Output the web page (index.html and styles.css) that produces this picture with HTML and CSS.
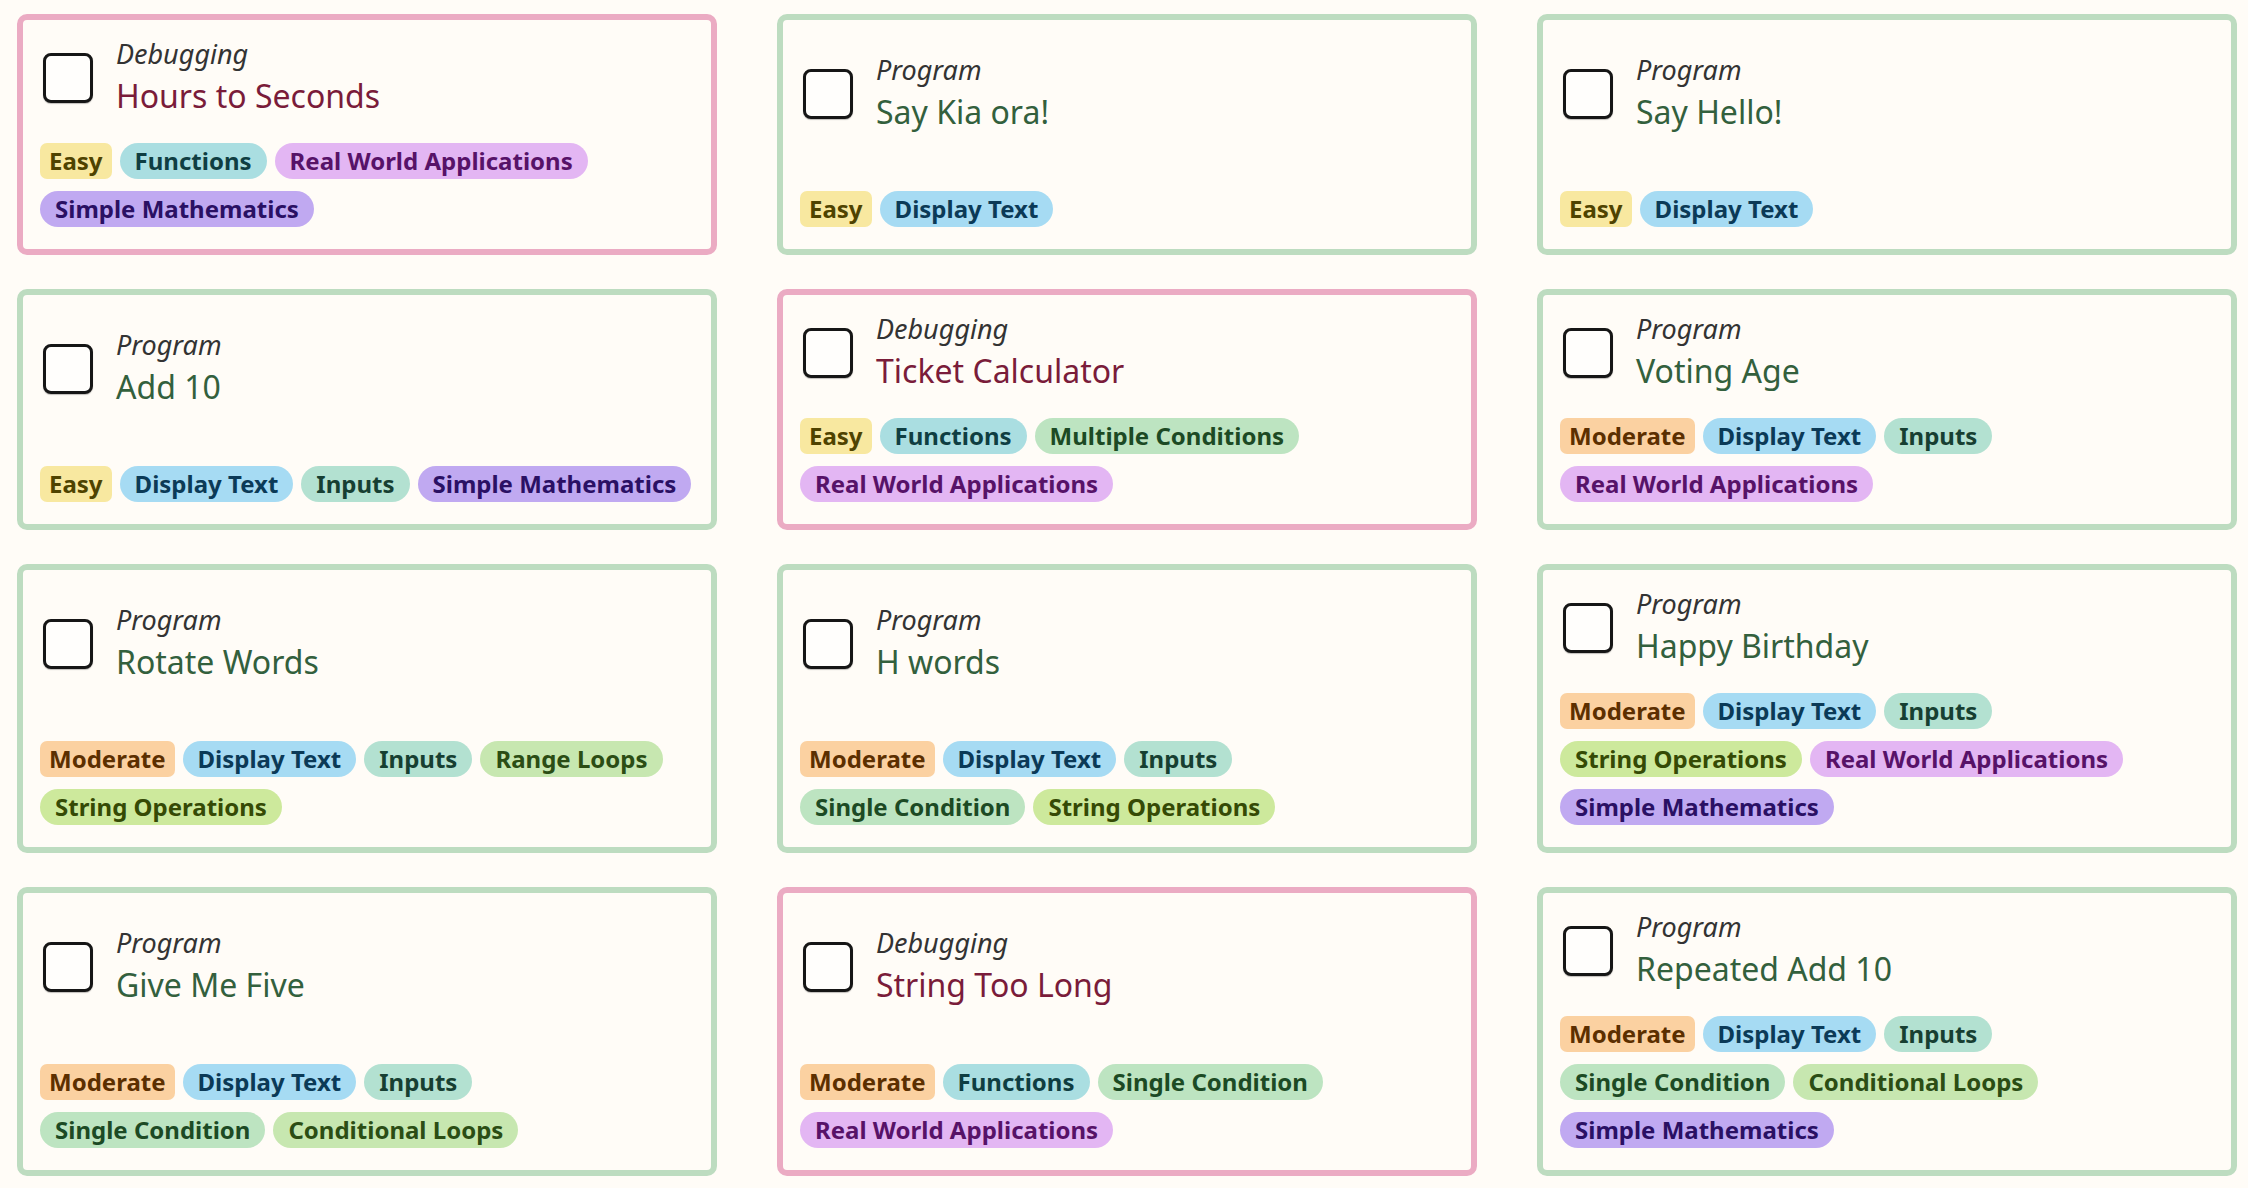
FILE: index.html
```html
<!DOCTYPE html>
<html lang="en">
<head>
<meta charset="utf-8">
<title>Challenges</title>
<link rel="stylesheet" href="styles.css">
</head>
<body>
<main class="grid">

  <section class="card debug">
    <div class="head"><span class="check"></span><div class="names"><div class="kind">Debugging</div><div class="title">Hours to Seconds</div></div></div>
    <div class="tags"><span class="tag easy">Easy</span><span class="tag func">Functions</span><span class="tag real">Real World Applications</span><span class="tag math">Simple Mathematics</span></div>
  </section>

  <section class="card prog">
    <div class="head"><span class="check"></span><div class="names"><div class="kind">Program</div><div class="title">Say Kia ora!</div></div></div>
    <div class="tags"><span class="tag easy">Easy</span><span class="tag disp">Display Text</span></div>
  </section>

  <section class="card prog">
    <div class="head"><span class="check"></span><div class="names"><div class="kind">Program</div><div class="title">Say Hello!</div></div></div>
    <div class="tags"><span class="tag easy">Easy</span><span class="tag disp">Display Text</span></div>
  </section>

  <section class="card prog">
    <div class="head"><span class="check"></span><div class="names"><div class="kind">Program</div><div class="title">Add 10</div></div></div>
    <div class="tags"><span class="tag easy">Easy</span><span class="tag disp">Display Text</span><span class="tag inp">Inputs</span><span class="tag math">Simple Mathematics</span></div>
  </section>

  <section class="card debug">
    <div class="head"><span class="check"></span><div class="names"><div class="kind">Debugging</div><div class="title">Ticket Calculator</div></div></div>
    <div class="tags"><span class="tag easy">Easy</span><span class="tag func">Functions</span><span class="tag cond">Multiple Conditions</span><span class="tag real">Real World Applications</span></div>
  </section>

  <section class="card prog">
    <div class="head"><span class="check"></span><div class="names"><div class="kind">Program</div><div class="title">Voting Age</div></div></div>
    <div class="tags"><span class="tag mod">Moderate</span><span class="tag disp">Display Text</span><span class="tag inp">Inputs</span><span class="tag real">Real World Applications</span></div>
  </section>

  <section class="card prog">
    <div class="head"><span class="check"></span><div class="names"><div class="kind">Program</div><div class="title">Rotate Words</div></div></div>
    <div class="tags"><span class="tag mod">Moderate</span><span class="tag disp">Display Text</span><span class="tag inp">Inputs</span><span class="tag loop">Range Loops</span><span class="tag str">String Operations</span></div>
  </section>

  <section class="card prog">
    <div class="head"><span class="check"></span><div class="names"><div class="kind">Program</div><div class="title">H words</div></div></div>
    <div class="tags"><span class="tag mod">Moderate</span><span class="tag disp">Display Text</span><span class="tag inp">Inputs</span><span class="tag cond">Single Condition</span><span class="tag str">String Operations</span></div>
  </section>

  <section class="card prog">
    <div class="head"><span class="check"></span><div class="names"><div class="kind">Program</div><div class="title">Happy Birthday</div></div></div>
    <div class="tags"><span class="tag mod">Moderate</span><span class="tag disp">Display Text</span><span class="tag inp">Inputs</span><span class="tag str">String Operations</span><span class="tag real">Real World Applications</span><span class="tag math">Simple Mathematics</span></div>
  </section>

  <section class="card prog">
    <div class="head"><span class="check"></span><div class="names"><div class="kind">Program</div><div class="title">Give Me Five</div></div></div>
    <div class="tags"><span class="tag mod">Moderate</span><span class="tag disp">Display Text</span><span class="tag inp">Inputs</span><span class="tag cond">Single Condition</span><span class="tag loop">Conditional Loops</span></div>
  </section>

  <section class="card debug">
    <div class="head"><span class="check"></span><div class="names"><div class="kind">Debugging</div><div class="title">String Too Long</div></div></div>
    <div class="tags"><span class="tag mod">Moderate</span><span class="tag func">Functions</span><span class="tag cond">Single Condition</span><span class="tag real">Real World Applications</span></div>
  </section>

  <section class="card prog">
    <div class="head"><span class="check"></span><div class="names"><div class="kind">Program</div><div class="title">Repeated Add 10</div></div></div>
    <div class="tags"><span class="tag mod">Moderate</span><span class="tag disp">Display Text</span><span class="tag inp">Inputs</span><span class="tag cond">Single Condition</span><span class="tag loop">Conditional Loops</span><span class="tag math">Simple Mathematics</span></div>
  </section>

</main>
</body>
</html>
```

FILE: styles.css
```css
html, body {
  margin: 0;
  padding: 0;
  background: #fffcf7;
  font-family: "Noto Sans", "Open Sans", sans-serif;
}

.grid {
  display: grid;
  grid-template-columns: repeat(3, 700px);
  column-gap: 60px;
  row-gap: 34px;
  padding: 14px 0 0 17px;
}

.card {
  box-sizing: border-box;
  display: flex;
  flex-direction: column;
  gap: 23px;
  border: 6px solid;
  border-radius: 10px;
  background: #fffcf7;
  padding: 16px 15px 22px 17px;
}

.card.debug { border-color: #ebabc3; }
.card.prog { border-color: #bddcc0; }

.head {
  display: flex;
  align-items: center;
  gap: 23px;
  margin: auto 0 auto 3px;
}

.check {
  box-sizing: border-box;
  flex: none;
  width: 50px;
  height: 50px;
  border: 3px solid #161616;
  border-radius: 8px;
  background: #fffefc;
  box-shadow: 0 1px 1px rgba(0, 0, 0, 0.25);
}

.kind {
  font-size: 27px;
  line-height: 36px;
  font-style: italic;
  color: #333333;
}

.title {
  font-size: 32px;
  line-height: 48px;
}

.debug .title { color: #7a1c3a; }
.prog .title { color: #33603d; }

.tags {
  display: flex;
  flex-wrap: wrap;
  gap: 12px 8px;
  margin-top: auto;
}

.tag {
  font-size: 24px;
  line-height: 36px;
  font-weight: 700;
  padding: 0 15px;
  border-radius: 18px;
  white-space: nowrap;
}

.tag.easy { background: #f8e8a0; color: #4f4300; padding: 0 9px; border-radius: 7px; }
.tag.mod { background: #fbd1a1; color: #5c2f00; padding: 0 9px; border-radius: 7px; }
.tag.func { background: #aadee1; color: #0f3e42; }
.tag.real { background: #e3b6f3; color: #571268; }
.tag.math { background: #c0a9f1; color: #2a1064; }
.tag.disp { background: #a6dbf3; color: #0b3a57; }
.tag.inp { background: #b3e1d1; color: #173f32; }
.tag.cond { background: #bde4c1; color: #1c4a24; }
.tag.loop { background: #c7e7b0; color: #2b4d14; }
.tag.str { background: #cde99c; color: #354a05; }
```
